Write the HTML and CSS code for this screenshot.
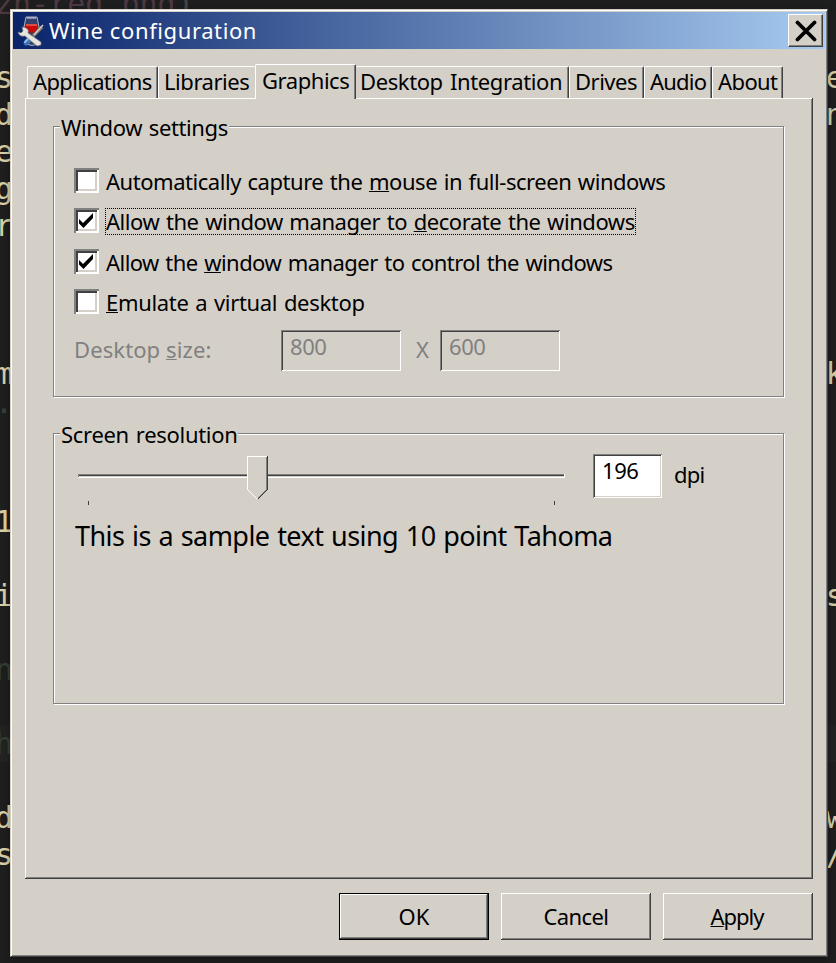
FILE: index.html
```
<!DOCTYPE html>
<html lang="en">
<head>
<meta charset="utf-8">
<title>Wine configuration</title>
<link rel="stylesheet" href="styles.css">
</head>
<body>
<div class="desktop">
  <div class="terminal">
    <div class="line faded">zh-reg.png<span class="paren">)</span></div>
    <div class="line"></div>
    <div class="line">s                                             e</div>
    <div class="line">d                                             n</div>
    <div class="line">e</div>
    <div class="line">g</div>
    <div class="line">r</div>
    <div class="line"></div>
    <div class="line"></div>
    <div class="line"></div>
    <div class="line">m                                             k</div>
    <div class="line green">·</div>
    <div class="line"></div>
    <div class="line"></div>
    <div class="line">1</div>
    <div class="line"></div>
    <div class="line">i                                             s</div>
    <div class="line"></div>
    <div class="line green">n</div>
    <div class="line"></div>
    <div class="line green current">h</div>
    <div class="line"></div>
    <div class="line">d                                             w</div>
    <div class="line">s                                             /</div>
  </div>

  <div class="window">
    <div class="titlebar">
      <svg class="app-icon" width="28" height="32" viewBox="0 0 28 32">
        <path d="M9 1h11l2 10q0 6-5 8v7l4 2q-6 3-12 0l4-2v-7q-6-2-6-8z" fill="#33406a" stroke="#aab4c4" stroke-width="1"/>
        <path d="M8 9h13q0 7-6.500 8Q8 16 8 9z" fill="#c80a0a"/>
        <path d="M9 9h11" stroke="#ff5a4a" stroke-width="1.500"/>
        <path d="M10 2h9" stroke="#dde3ea" stroke-width="1"/>
        <path d="M25 11l-9 9" stroke="#77736c" stroke-width="3.500"/>
        <path d="M26 9l-9 10" stroke="#d4cfc2" stroke-width="1.500"/>
        <path d="M13 22l-4 5" stroke="#3973b4" stroke-width="5" stroke-linecap="round"/>
        <path d="M12 22l-4 4" stroke="#91bbea" stroke-width="2" stroke-linecap="round"/>
        <path d="M5 11l1 4-2 2-3-1q1 5 7 4l12 10 4-1v-3L11 17q2-5-6-6z" fill="#e4e3de" stroke="#77777a" stroke-width=".7"/>
      </svg>
      <span class="title">Wine configuration</span>
      <button class="close" aria-label="Close"><svg width="22" height="22" viewBox="0 0 22 22"><path d="M2.500 2.500l17 17M19.500 2.500l-17 17" stroke="#000" stroke-width="3.800" stroke-linecap="round"/></svg></button>
    </div>

    <div class="client">
      <div class="tabs">
        <div class="tab applications">Applications</div>
        <div class="tab libraries">Libraries</div>
        <div class="tab graphics selected">Graphics</div>
        <div class="tab integration">Desktop Integration</div>
        <div class="tab drives">Drives</div>
        <div class="tab audio">Audio</div>
        <div class="tab about">About</div>
      </div>

      <div class="panel">
        <div class="group">
          <div class="legend windows-legend">Window settings</div>
          <div class="options">
            <div class="option"><span class="box"></span><span class="label capture">Automatically capture the <u>m</u>ouse in full-screen windows</span></div>
            <div class="option"><span class="box"><svg width="17" height="17" viewBox="0 0 17 17"><path d="M1 7l4 4L15 1v5L5.500 16 1 11.500z"/></svg></span><span class="label decorate focused">Allow the window manager to <u>d</u>ecorate the windows</span></div>
            <div class="option lower"><span class="box"><svg width="17" height="17" viewBox="0 0 17 17"><path d="M1 7l4 4L15 1v5L5.500 16 1 11.500z"/></svg></span><span class="label control">Allow the <u>w</u>indow manager to control the windows</span></div>
            <div class="option"><span class="box"></span><span class="label virtual"><u>E</u>mulate a virtual desktop</span></div>
          </div>
          <div class="size-row">
            <span class="size-label">Desktop <u>s</u>ize:</span>
            <span class="field">800</span>
            <span class="times">X</span>
            <span class="field">600</span>
          </div>
        </div>

        <div class="group resolution">
          <div class="legend screen-legend">Screen resolution</div>
          <div class="dpi-row">
            <svg class="slider" width="487" height="52" viewBox="0 0 487 52" shape-rendering="crispEdges">
              <path d="M0 20h487v4H0z" fill="#fff"/>
              <path d="M0 20h486v3H0z" fill="#808080"/>
              <path d="M1 21h485v1H1z" fill="#404040"/>
              <path d="M1 22h485v1H1z" fill="#d4d0c8"/>
              <path d="M169 2h21v33l-10.500 10.500L169 35z" fill="#d4d0c8"/>
              <path d="M189.500 2v33.500l-10 10" fill="none" stroke="#404040"/>
              <path d="M188.500 3v32.500l-9 9" fill="none" stroke="#808080"/>
              <path d="M189 2.500h-19.500v33l9.500 9.500" fill="none" stroke="#fff"/>
              <path d="M10 47h1v4h-1zM476 47h1v4h-1z" fill="#404040"/>
            </svg>
            <span class="field dpi">196</span>
            <span class="unit">dpi</span>
          </div>
          <div class="sample">This is a sample text using 10 point Tahoma</div>
        </div>
      </div>

      <div class="buttons">
        <button class="push default ok">OK</button>
        <button class="push cancel">Cancel</button>
        <button class="push apply"><span><u>A</u>pply</span></button>
      </div>
    </div>
  </div>
</div>
</body>
</html>
```
FILE: styles.css
```
* { box-sizing: border-box; }

body {
  margin: 0;
  background: #1e1e1e;
  color: #000;
  font: 22px/27px "Noto Sans", sans-serif;
  white-space: nowrap;
}

.desktop {
  position: relative;
  width: 836px;
  height: 963px;
  overflow: hidden;
}

/* Terminal behind the dialog */
.terminal {
  margin-top: -15px;
  font: 30px/37px "DejaVu Sans Mono", monospace;
  color: #d6cda4;
}
.line { height: 37px; text-indent: -5px; white-space: pre; }
.line.faded { color: #4e3843; }
.line.green { color: #334034; }
.line.current { background: #222; }
.paren { color: #444; }

/* Dialog frame */
.window {
  position: absolute;
  left: 10px;
  top: 9px;
  width: 818px;
  height: 948px;
  padding: 2px;
  background: #d4d0c8;
  border: 1px solid;
  border-color: #d4d0c8 #404040 #404040 #d4d0c8;
  box-shadow: inset 1px 1px #fff, inset -1px -1px #808080, 0 2px 6px rgba(0, 0, 0, .35);
}

.titlebar {
  display: flex;
  height: 37px;
  padding: 2px 2px 2px 4px;
  background: linear-gradient(90deg, #0a246a, #a6caf0);
  color: #fff;
}
.app-icon { margin-top: 2px; }
.title { flex: 1; padding: 3px 0 0 4px; letter-spacing: .6px; }

.close {
  display: flex;
  align-items: flex-start;
  width: 35px;
  height: 33px;
  padding: 5px 0 0 6px;
  background: #d4d0c8;
  border: 1px solid;
  border-color: #fff #404040 #404040 #fff;
  box-shadow: inset -1px -1px #808080;
}

.client { padding: 15px 12px 0; }

/* Tab strip */
.tabs {
  display: flex;
  align-items: flex-end;
  height: 34px;
  padding-left: 2px;
}
.tab {
  position: relative;
  height: 32px;
  padding: 1px 0 0 5px;
  border: 1px solid;
  border-color: #fff #404040 transparent #fff;
  border-bottom: 0;
  border-radius: 2px 2px 0 0;
  box-shadow: inset -1px 0 #808080;
  background: #d4d0c8;
}
.applications { width: 131px; letter-spacing: -.65px; }
.libraries { width: 97px; border-right: 0; box-shadow: none; letter-spacing: -.45px; }
.graphics { width: 101px; padding-left: 6px; letter-spacing: -.45px; }
.integration { width: 213px; padding-left: 4px; border-left: 0; letter-spacing: -.4px; word-spacing: 2px; }
.drives { width: 75px; letter-spacing: -.5px; }
.audio { width: 68px; letter-spacing: -.8px; }
.about { width: 71px; letter-spacing: -.6px; }
.tab.selected { height: 35px; margin-bottom: -1px; padding-top: 2px; z-index: 1; }

.panel {
  height: 781px;
  padding: 28px;
  box-shadow: inset -1px -1px #404040, inset 1px 1px #fff, inset -2px -2px #808080;
}

/* Etched group boxes */
.group {
  width: 731px;
  height: 271px;
  padding: 0 0 0 20px;
  border: 1px solid #808080;
  box-shadow: 1px 1px #fff, inset 1px 1px #fff;
}
.resolution { margin-top: 36px; }
.legend {
  width: 169px;
  margin: -13px 0 0 -14px;
  padding-left: 1px;
  background: #d4d0c8;
}
.windows-legend { letter-spacing: -.4px; word-spacing: 1.500px; }
.screen-legend { width: 178px; letter-spacing: -.3px; word-spacing: 1.500px; }

.options { margin-top: 27px; }
.option { display: flex; height: 27px; margin-bottom: 13px; }
.option.lower { margin-top: 14px; }
.box {
  width: 25px;
  height: 25px;
  padding: 4px;
  margin-right: 6px;
  background: #fff;
  box-shadow: inset 2px 2px #808080, inset -2px -2px #fff, inset 4px 4px #404040, inset -4px -4px #d4d0c8;
}
.box svg { display: block; }
.label { padding: 0 1px; word-spacing: 1.300px; }
.capture { letter-spacing: -.46px; }
.decorate { letter-spacing: -.44px; }
.control { letter-spacing: -.54px; }
.virtual { letter-spacing: -.32px; }
.focused { outline: 1px dotted #000; outline-offset: -1px; }

u {
  text-decoration: underline 1px;
  text-underline-offset: 1px;
  text-decoration-skip-ink: none;
}

.size-row { display: flex; height: 41px; margin-top: 14px; color: #808080; }
.size-label { width: 207px; padding-top: 6px; letter-spacing: .1px; }
.times { width: 39px; padding: 6px 0 0 15px; }
.field {
  width: 120px;
  height: 41px;
  padding: 3px 0 0 9px;
  letter-spacing: -.4px;
  box-shadow: inset 1px 1px #808080, inset -1px -1px #fff, inset 2px 2px #404040, inset -2px -2px #d4d0c8;
}

/* Resolution slider and sample */
.dpi-row { display: flex; margin: 6px 0 0 4px; height: 52px; }
.slider { margin-right: 28px; }
.field.dpi { width: 69px; height: 44px; background: #fff; color: #000; }
.unit { padding: 7px 0 0 12px; letter-spacing: -.8px; }
.sample { margin-top: 13px; padding-left: 1px; font-size: 27px; line-height: 34px; letter-spacing: -.56px; word-spacing: 1.200px; }

/* Push buttons */
.buttons { display: flex; justify-content: flex-end; gap: 12px; margin-top: 14px; }
.push {
  width: 150px;
  height: 47px;
  padding: 0;
  color: #000;
  font: inherit;
  background: #d4d0c8;
  border: 0;
  box-shadow: inset -1px -1px #404040, inset 1px 1px #fff, inset -2px -2px #808080;
}
.push.default { border: 1px solid #000; }
.cancel { letter-spacing: -.6px; }
.apply { padding-right: 2px; letter-spacing: -1px; }
```
